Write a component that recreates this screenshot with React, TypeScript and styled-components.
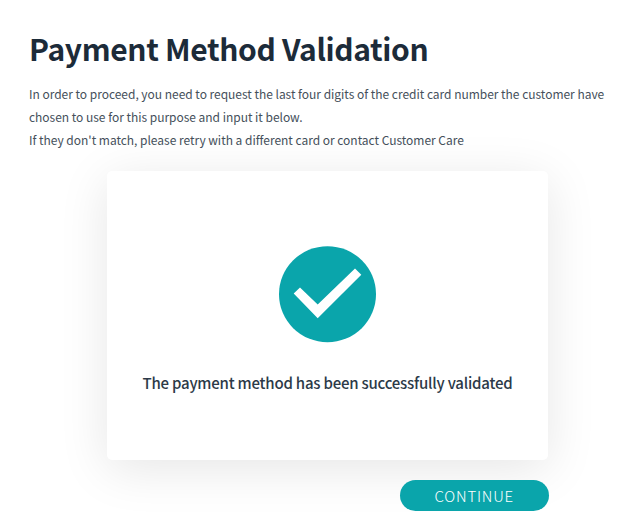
import React from 'react';
import styled, { createGlobalStyle } from 'styled-components';

const GlobalStyle = createGlobalStyle`
  * { box-sizing: border-box; }
  body { margin: 0; background: #fff; font-family: "Noto Sans CJK SC", "Open Sans", sans-serif; }
`;

const Page = styled.main`
  height: 529px;
  padding: 26px 0 0 29px;
  overflow: hidden;
  display: flex;
  flex-direction: column;
  align-items: flex-start;
`;

const Title = styled.h1`
  margin: 0;
  height: 44px;
  font: 700 30px/44px "Noto Sans CJK SC", sans-serif;
  letter-spacing: -0.35px;
  color: #1c2b39;
  white-space: nowrap;
`;

const Intro = styled.div`
  margin-top: 12px;
  color: #45505b;
`;

const Line = styled.span`
  display: block;
  width: max-content;
  font-size: 12px;
  line-height: 23px;
  letter-spacing: -0.025px;
`;

const Panel = styled.section`
  width: 441px;
  height: 289px;
  margin: 20px 0 0 78px;
  padding-top: 75px;
  border-radius: 5px;
  background: #fff;
  box-shadow: 0 9px 50px rgba(0, 0, 0, 0.1);
  display: flex;
  flex-direction: column;
  align-items: center;
`;

const Message = styled.p`
  margin: 28px 0 0;
  font-size: 15px;
  line-height: 24px;
  font-weight: 500;
  letter-spacing: -0.22px;
  color: #2c3a48;
  white-space: nowrap;
`;

const Continue = styled.button`
  width: 148.5px;
  height: 31px;
  margin: 20px 0 0 371px;
  padding: 0;
  border: 0;
  border-radius: 16px;
  background: #0aa5ab;
  color: #fff;
  font: 300 15px/31px "Noto Sans CJK SC", sans-serif;
  letter-spacing: 0.8px;
`;

export default function App() {
  return (
    <>
      <GlobalStyle />
      <Page>
        <Title>Payment Method Validation</Title>
        <Intro>
          <Line>In order to proceed, you need to request the last four digits of the credit card number the customer have</Line>
          <Line>chosen to use for this purpose and input it below.</Line>
          <Line>If they don't match, please retry with a different card or contact Customer Care</Line>
        </Intro>
        <Panel>
          <svg width="97" height="97" viewBox="0 0 97 97" aria-hidden="true">
            <ellipse cx="48.5" cy="48.2" rx="48.5" ry="48" fill="#0aa5ab" />
            <path d="M14.7 47.4 21 41.4 38.7 58.4 76 22.4 82.3 28.8 38.7 72.2Z" fill="#fff" />
          </svg>
          <Message>The payment method has been successfully validated</Message>
        </Panel>
        <Continue>CONTINUE</Continue>
      </Page>
    </>
  );
}
